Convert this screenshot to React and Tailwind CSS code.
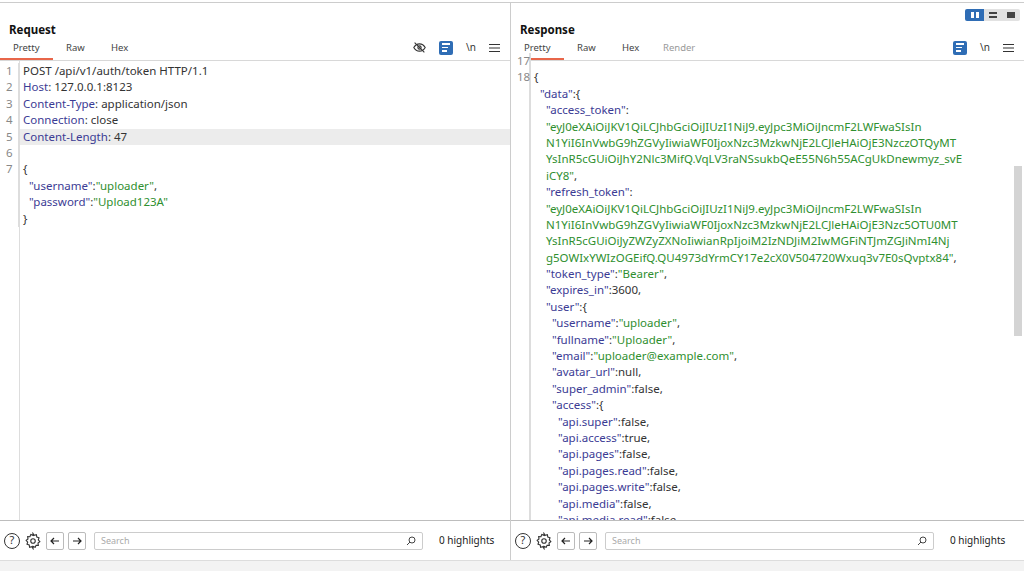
const K = ({ children }) => <span className="text-[#3b3b94]">{children}</span>;
const S = ({ children }) => <span className="text-[#2f8f2f]">{children}</span>;

function Icons({ eye }) {
  return (
    <div className="flex items-center gap-[13px] pr-[10px]">
      {eye && (
        <svg width="13" height="13" viewBox="0 0 16 16" fill="none" stroke="#333" strokeWidth="1.4">
          <path d="M1 8s2.5-4.5 7-4.5S15 8 15 8s-2.5 4.5-7 4.5S1 8 1 8z" />
          <circle cx="8" cy="8" r="2" />
          <path d="M2 2l12 12" />
        </svg>
      )}
      <div className="w-[14px] h-[14px] rounded-[2px] bg-[#2f6db5] flex flex-col justify-center gap-[2px] px-[3px]">
        <div className="h-[1.5px] bg-white w-full" />
        <div className="h-[1.5px] bg-white w-[80%]" />
        <div className="h-[1.5px] bg-white w-[60%]" />
      </div>
      <span className="text-[10px] text-[#333] font-['Liberation_Sans']">\n</span>
      <svg width="11" height="10" viewBox="0 0 11 10" stroke="#333" strokeWidth="1.2">
        <path d="M0 1.5h11M0 5h11M0 8.5h11" />
      </svg>
    </div>
  );
}

function Tabs({ render }) {
  return (
    <div className="flex items-end justify-between h-[22px] border-b border-[#d8d8d8]">
      <div className="flex text-[9.5px] text-[#444] font-['Liberation_Sans']">
        <div className="w-[53px] pl-[13px] pb-[3px] border-b-2 border-[#e8664a]">Pretty</div>
        <div className="w-[45px] pl-[13px] pb-[3px]">Raw</div>
        <div className="w-[48px] pl-[13px] pb-[3px]">Hex</div>
        {render && <div className="pl-[6px] pb-[3px] text-[#999]">Render</div>}
      </div>
      <div className="pb-[5px]"><Icons eye={!render} /></div>
    </div>
  );
}

function Footer() {
  return (
    <div className="h-[40px] flex items-center px-[4px] gap-[4px] border-t border-[#bdbdbd] font-['Liberation_Sans']">
      <div className="w-[16px] h-[16px] rounded-full border border-[#333] text-[11px] flex items-center justify-center">?</div>
      <svg width="18" height="18" viewBox="0 0 24 24" fill="none" stroke="#333" strokeWidth="1.5">
        <circle cx="12" cy="12" r="3" />
        <path d="M12 2l1.5 2.5 3-.8.6 3 2.9 1-.9 2.9 2 2.3-2.4 1.9.4 3-3-.1-1.2 2.8-2.9-1.3L12 22l-1.5-2.5-3 .8-.6-3-2.9-1 .9-2.9-2-2.3 2.4-1.9-.4-3 3 .1L9.1 3.2 12 4.5z" />
      </svg>
      <div className="w-[18px] h-[18px] border border-[#bbb] rounded-[2px] flex items-center justify-center">
        <svg width="10" height="10" viewBox="0 0 10 10" fill="none" stroke="#222" strokeWidth="1.2"><path d="M9 5H1M4 2L1 5l3 3" /></svg>
      </div>
      <div className="w-[18px] h-[18px] border border-[#bbb] rounded-[2px] flex items-center justify-center">
        <svg width="10" height="10" viewBox="0 0 10 10" fill="none" stroke="#222" strokeWidth="1.2"><path d="M1 5h8M6 2l3 3-3 3" /></svg>
      </div>
      <div className="ml-[4px] w-[329px] h-[18px] border border-[#ccc] rounded-[2px] flex items-center justify-between px-[6px]">
        <span className="text-[9px] text-[#aaa]">Search</span>
        <svg width="10" height="10" viewBox="0 0 10 10" fill="none" stroke="#444" strokeWidth="1">
          <circle cx="6" cy="4" r="3" /><path d="M4 6L1 9" />
        </svg>
      </div>
      <span className="ml-[12px] text-[10px] text-[#222]">0 highlights</span>
    </div>
  );
}

const L = ({ n, i = 0, hl, children }) => (
  <div className={"flex h-[16.4px] leading-[16.4px] " + (hl ? "bg-[#ececec]" : "")}>
    <div className="w-[19px] shrink-0 pl-[6px] text-[#888] bg-white border-r border-[#ddd]">{n}</div>
    <div className="pl-[4px] whitespace-pre">{" ".repeat(i)}{children}</div>
  </div>
);

export default function App() {
  return (
    <div className="w-[1024px] h-[571px] bg-white flex flex-col font-['Liberation_Mono'] text-[11.5px] text-[#333] overflow-hidden">
      <div className="flex-1 flex border-t border-[#ccc] mt-[2px] min-h-0">
        <div className="w-[511px] flex flex-col border-r border-[#ccc]">
          <div className="h-[36px] flex items-end pl-[9px] pb-[1px] font-['Liberation_Sans'] font-bold text-[11.5px] text-[#111]">Request</div>
          <Tabs />
          <div className="flex-1 flex flex-col relative pt-[2px]">
            <div className="absolute left-[19px] top-0 bottom-0 border-r border-[#ddd]" />
            <L n="1">POST /api/v1/auth/token HTTP/1.1</L>
            <L n="2"><K>Host</K>: 127.0.0.1:8123</L>
            <L n="3"><K>Content-Type</K>: application/json</L>
            <L n="4"><K>Connection</K>: close</L>
            <L n="5" hl><K>Content-Length</K>: 47</L>
            <L n="6"></L>
            <L n="7">{"{"}</L>
            <L i={2}><K>"username"</K>:<S>"uploader"</S>,</L>
            <L i={2}><K>"password"</K>:<S>"Upload123A"</S></L>
            <L>{"}"}</L>
          </div>
          <Footer />
        </div>
        <div className="flex-1 flex flex-col relative">
          <div className="absolute right-[4px] top-[6px] flex rounded-[2px] overflow-hidden">
            <div className="w-[19px] h-[12px] bg-[#2f6db5] flex items-center justify-center gap-[2px]"><div className="w-[3px] h-[6px] bg-white" /><div className="w-[3px] h-[6px] bg-white" /></div>
            <div className="w-[17px] h-[12px] bg-[#e2e2e2] flex flex-col items-center justify-center gap-[2px]"><div className="w-[8px] h-[2px] bg-[#444]" /><div className="w-[8px] h-[2px] bg-[#444]" /></div>
            <div className="w-[19px] h-[12px] bg-[#e2e2e2] flex items-center justify-center"><div className="w-[8px] h-[6px] bg-[#444]" /></div>
          </div>
          <div className="h-[36px] flex items-end pl-[9px] pb-[1px] font-['Liberation_Sans'] font-bold text-[11.5px] text-[#111]">Response</div>
          <Tabs render />
          <div className="flex-1 flex flex-col relative overflow-hidden mt-[-8px] min-h-0">
            <div className="absolute left-[19px] top-0 bottom-0 border-r border-[#ddd]" />
            <div className="absolute right-[2px] top-[113px] w-[8px] h-[170px] bg-[#d4d4d4]" />
            <L n="17"></L>
            <L n="18">{"{"}</L>
            <L i={2}><K>"data"</K>:{"{"}</L>
            <L i={4}><K>"access_token"</K>:</L>
            <L i={4}><S>"eyJ0eXAiOiJKV1QiLCJhbGciOiJIUzI1NiJ9.eyJpc3MiOiJncmF2LWFwaSIsIn</S></L>
            <L i={4}><S>N1YiI6InVwbG9hZGVyIiwiaWF0IjoxNzc3MzkwNjE2LCJleHAiOjE3NzczOTQyMT</S></L>
            <L i={4}><S>YsInR5cGUiOiJhY2Nlc3MifQ.VqLV3raNSsukbQeE55N6h55ACgUkDnewmyz_svE</S></L>
            <L i={4}><S>iCY8"</S>,</L>
            <L i={4}><K>"refresh_token"</K>:</L>
            <L i={4}><S>"eyJ0eXAiOiJKV1QiLCJhbGciOiJIUzI1NiJ9.eyJpc3MiOiJncmF2LWFwaSIsIn</S></L>
            <L i={4}><S>N1YiI6InVwbG9hZGVyIiwiaWF0IjoxNzc3MzkwNjE2LCJleHAiOjE3Nzc5OTU0MT</S></L>
            <L i={4}><S>YsInR5cGUiOiJyZWZyZXNoIiwianRpIjoiM2IzNDJiM2IwMGFiNTJmZGJiNmI4Nj</S></L>
            <L i={4}><S>g5OWIxYWIzOGEifQ.QU4973dYrmCY17e2cX0V504720Wxuq3v7E0sQvptx84"</S>,</L>
            <L i={4}><K>"token_type"</K>:<S>"Bearer"</S>,</L>
            <L i={4}><K>"expires_in"</K>:3600,</L>
            <L i={4}><K>"user"</K>:{"{"}</L>
            <L i={6}><K>"username"</K>:<S>"uploader"</S>,</L>
            <L i={6}><K>"fullname"</K>:<S>"Uploader"</S>,</L>
            <L i={6}><K>"email"</K>:<S>"uploader@example.com"</S>,</L>
            <L i={6}><K>"avatar_url"</K>:null,</L>
            <L i={6}><K>"super_admin"</K>:false,</L>
            <L i={6}><K>"access"</K>:{"{"}</L>
            <L i={8}><K>"api.super"</K>:false,</L>
            <L i={8}><K>"api.access"</K>:true,</L>
            <L i={8}><K>"api.pages"</K>:false,</L>
            <L i={8}><K>"api.pages.read"</K>:false,</L>
            <L i={8}><K>"api.pages.write"</K>:false,</L>
            <L i={8}><K>"api.media"</K>:false,</L>
            <L i={8}><K>"api.media.read"</K>:false,</L>
          </div>
          <Footer />
        </div>
      </div>
      <div className="h-[11px] bg-[#f3f3f3] border-t border-[#ddd]" />
    </div>
  );
}
